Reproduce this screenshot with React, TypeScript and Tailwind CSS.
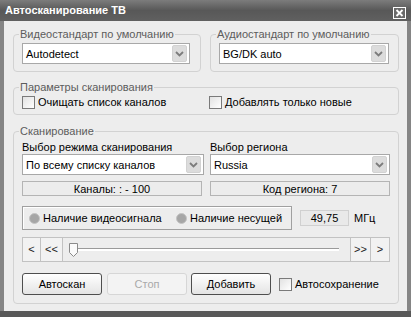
import type { ReactNode } from 'react';

const Select = ({ value, className }: { value: string; className: string }) => (
  <div className={`flex h-[21px] items-center border border-[#a8a8a8] bg-white pl-[3px] pr-[2px] ${className}`}>
    <span className="flex-1 text-[11px] leading-[14px] text-black">{value}</span>
    <span className="flex h-[17px] w-[15px] items-center justify-center rounded-[2px] border border-[#d2d2d2] bg-[#dcdcdc]">
      <svg width="9" height="6" viewBox="0 0 9 6">
        <path d="M1 1l3.5 3.5L8 1" stroke="#7c7c7c" strokeWidth="1.8" fill="none" />
      </svg>
    </span>
  </div>
);

const Checkbox = ({ label, className = '' }: { label: string; className?: string }) => (
  <label className={`flex items-center ${className}`}>
    <span className="h-[13px] w-[13px] border border-[#7a7a7a] bg-gradient-to-br from-[#e2e2e2] to-white" />
    <span className="ml-[3px] text-[11px] leading-[14px] text-black">{label}</span>
  </label>
);

const InfoBox = ({ children }: { children: ReactNode }) => (
  <div className="mt-[6px] flex h-[15px] w-[180px] items-center justify-center border border-[#b4b4b4] bg-[#ececec] text-[11px] leading-[14px] text-black">
    {children}
  </div>
);

const Lamp = ({ label, className = '' }: { label: string; className?: string }) => (
  <div className={`flex items-center ${className}`}>
    <span className="h-[11px] w-[11px] rounded-full border border-[#c4c4c4] bg-[#a6a6a6]" />
    <span className="ml-[3px] text-[11px] leading-[14px] text-black">{label}</span>
  </div>
);

const Button = ({ label, disabled = false, className = '' }: { label: string; disabled?: boolean; className?: string }) => (
  <button
    className={`h-[22px] w-[80px] rounded-[3px] border text-[11px] ${
      disabled
        ? 'border-[#d6d6d6] bg-[#f3f3f3] text-[#a9a9a9]'
        : 'border-[#4e4e4e] bg-gradient-to-b from-white to-[#e4e4e4] text-black'
    } ${className}`}
  >
    {label}
  </button>
);

const StepCell = ({ label, className }: { label: string; className: string }) => (
  <div className={`flex h-full items-center justify-center bg-[#f2f2f2] text-[11px] text-[#222] ${className}`}>{label}</div>
);

const Legend = ({ children }: { children: ReactNode }) => (
  <legend className="ml-[-3px] px-[1px] text-[11px] leading-[14px] text-[#5c5c5c]">{children}</legend>
);

export default function App() {
  return (
    <div className="flex h-[317px] w-[411px] flex-col bg-[#858585] font-['Liberation_Sans',Arial,sans-serif]">
      <div className="flex h-[21px] items-center justify-between bg-gradient-to-b from-[#7c7c7c] via-[#585858] to-[#606060] pl-[5px] pr-[5px]">
        <span className="text-[11px] font-bold text-white">Автосканирование ТВ</span>
        <span className="mt-[4px] flex h-[12px] w-[13px] items-center justify-center border border-white bg-[#6a6a6a]">
          <svg width="9" height="8" viewBox="0 0 9 8">
            <path d="M1.5 1l6 6M7.5 1l-6 6" stroke="white" strokeWidth="1.8" />
          </svg>
        </span>
      </div>

      <div className="mx-[4px] flex-1 bg-[#ededed] pl-[9px] pr-[8px] pt-[6px]">
        <div className="flex gap-[9px]">
          <fieldset className="h-[45px] w-[188px] rounded-[4px] border border-[#d2d2d2] px-[8px]">
            <Legend>Видеостандарт по умолчанию</Legend>
            <Select value="Autodetect" className="mt-[2px] w-[168px]" />
          </fieldset>
          <fieldset className="h-[45px] w-[189px] rounded-[4px] border border-[#d2d2d2] px-[8px]">
            <Legend>Аудиостандарт по умолчанию</Legend>
            <Select value="BG/DK auto" className="mt-[2px] w-[170px]" />
          </fieldset>
        </div>

        <fieldset className="mt-[8px] h-[35px] rounded-[4px] border border-[#d2d2d2] px-[8px]">
          <Legend>Параметры сканирования</Legend>
          <div className="mt-[1px] flex items-center">
            <Checkbox label="Очищать список каналов" className="w-[187px]" />
            <Checkbox label="Добавлять только новые" />
          </div>
        </fieldset>

        <fieldset className="mt-[9px] rounded-[4px] border border-[#d2d2d2] px-[8px] pb-[8px]">
          <Legend>Сканирование</Legend>
          <div className="mt-[2px] flex gap-[6px]">
            <div className="w-[182px]">
              <div className="text-[11px] leading-[14px] text-black">Выбор режима сканирования</div>
              <Select value="По всему списку каналов" className="w-[182px]" />
              <InfoBox>Каналы: : - 100</InfoBox>
            </div>
            <div className="w-[180px]">
              <div className="text-[11px] leading-[14px] text-black">Выбор региона</div>
              <Select value="Russia" className="w-[180px]" />
              <InfoBox>Код региона: 7</InfoBox>
            </div>
          </div>

          <div className="mt-[10px] flex items-center">
            <div className="flex h-[24px] w-[270px] items-center border border-[#a0a0a0] pl-[6px] shadow-[inset_1px_1px_0_#ffffff]">
              <Lamp label="Наличие видеосигнала" className="w-[147px]" />
              <Lamp label="Наличие несущей" />
            </div>
            <div className="ml-[8px] flex h-[16px] w-[49px] items-center justify-center border border-[#d0d0d0] bg-[#e9e9e9] text-[11px] text-black">
              49,75
            </div>
            <span className="ml-[5px] text-[11px] text-black">МГц</span>
          </div>

          <div className="mt-[7px] flex h-[25px] border border-[#c2c2c2]">
            <StepCell label="<" className="w-[18px] border-r border-[#c2c2c2]" />
            <StepCell label="<<" className="w-[22px] border-r border-[#c2c2c2]" />
            <div className="relative flex flex-1 items-center pl-[10px] pr-[11px]">
              <div className="h-[3px] flex-1 border-t border-[#9a9a9a] bg-white" />
              <svg className="absolute left-[6px] top-[5px]" width="9" height="14" viewBox="0 0 9 14">
                <path d="M0.5 0.5h8v9l-4 4-4-4z" fill="#fafafa" stroke="#8a8a8a" />
              </svg>
            </div>
            <StepCell label=">>" className="w-[20px] border-l border-[#c2c2c2]" />
            <StepCell label=">" className="w-[19px] border-l border-[#c2c2c2]" />
          </div>

          <div className="mt-[11px] flex items-center">
            <Button label="Автоскан" />
            <Button label="Стоп" disabled className="ml-[5px] w-[79px]" />
            <Button label="Добавить" className="ml-[4px]" />
            <Checkbox label="Автосохранение" className="ml-[8px]" />
          </div>
        </fieldset>
      </div>
      <div className="h-[6px] bg-[#585858]" />
    </div>
  );
}
